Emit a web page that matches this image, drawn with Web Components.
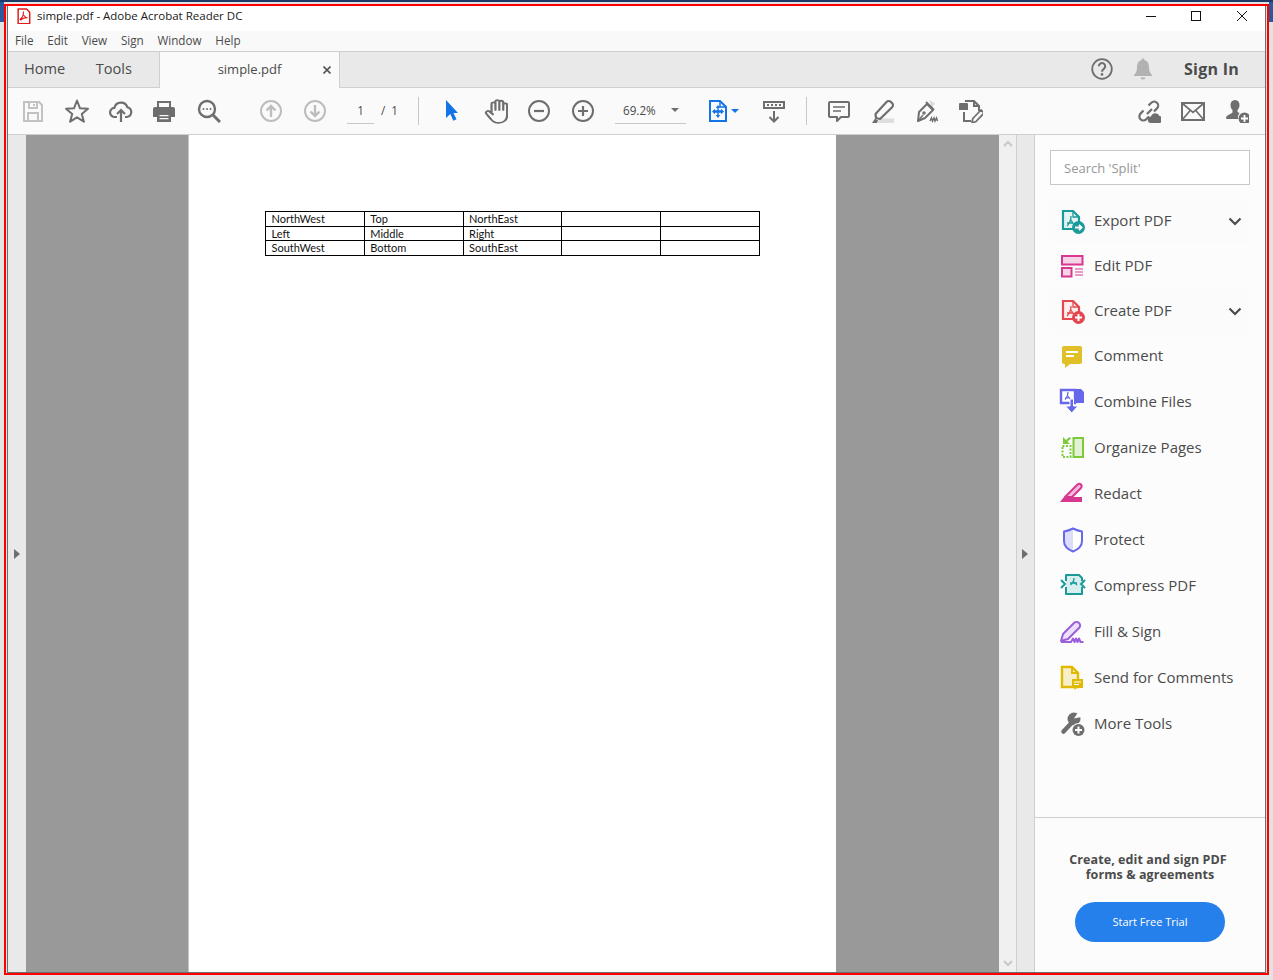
<!DOCTYPE html>
<html>
<head>
<meta charset="utf-8">
<title>simple.pdf - Adobe Acrobat Reader DC</title>
<style>
  html, body { margin: 0; height: 100%; overflow: hidden; }
  body { background-color: #e3e3e3; padding: 6px 7px 7px 7px; box-sizing: border-box; height: 980px; position: relative; font-family: "Open Sans", "Noto Sans", sans-serif;
    background-image: linear-gradient(#1f3a68, #1f3a68), linear-gradient(#2a5a9a, #2a5a9a), linear-gradient(#2a5a9a, #2a5a9a);
    background-size: 100% 2px, 4px 22px, 4px 22px; background-position: 0 0, 0 0, 100% 0; background-repeat: no-repeat; }
</style>
</head>
<body>
<reader-window>
  <reader-titlebar title-text="simple.pdf - Adobe Acrobat Reader DC"></reader-titlebar>
  <reader-menubar></reader-menubar>
  <reader-tabbar></reader-tabbar>
  <reader-toolbar></reader-toolbar>
  <reader-main></reader-main>
</reader-window>
<capture-frame></capture-frame>

<script>
const grey = '#6e6e6e';
const icons = {
  save: `<g fill="none" stroke="#c2c2c2" stroke-width="2"><path d="M3 3h15l3 3v16H3z"/><path d="M8 3v6h8V3M13 5v2M7 22v-8h10v8"/></g>`,
  star: `<path fill="none" stroke="${grey}" stroke-width="2" stroke-linejoin="round" d="M12 1.500l3 7.800 8 .5-6.200 5.100 2.100 7.800L12 18.300l-6.900 4.400 2.100-7.800L1 9.800l8-.5z"/>`,
  cloud: `<g fill="none" stroke="${grey}" stroke-width="2.200"><path d="M8 18H6a4.600 4.600 0 0 1-.6-9.200 6.800 6.800 0 0 1 13-.6A5 5 0 0 1 18 18h-2"/><path d="M12 23V11M8 15l4-4 4 4"/></g>`,
  print: `<g transform="translate(-1 0)"><path fill="${grey}" d="M5 2h14v6h-2V4H7v4H5zM3 8h18a2 2 0 0 1 2 2v8h-4v-4H5v4H1v-8a2 2 0 0 1 2-2z"/><path fill="${grey}" fill-rule="evenodd" d="M5 13h14v10H5zM7.500 16v1.300h9V16zm0 3v1.300h9V19z"/></g>`,
  search: `<g fill="none" stroke="${grey}"><circle cx="10" cy="10" r="8" stroke-width="2.400"/><path d="M16 16l7 7" stroke-width="3"/></g><g fill="${grey}"><circle cx="6.500" cy="10" r="1"/><circle cx="10" cy="10" r="1"/><circle cx="13.500" cy="10" r="1"/></g>`,
  up: `<g fill="none" stroke="#bdbdbd" stroke-width="2"><circle cx="12" cy="12" r="10"/><path stroke-width="2.400" d="M12 18V7M7.500 11.500L12 7l4.500 4.500"/></g>`,
  down: `<g fill="none" stroke="#bdbdbd" stroke-width="2"><circle cx="12" cy="12" r="10"/><path stroke-width="2.400" d="M12 6v11M7.500 12.500L12 17l4.500-4.500"/></g>`,
  cursor: `<path fill="#1473e6" transform="translate(1 0)" d="M6 1v18l4.300-4 3 6.800 3.200-1.500-3-6.300H18z"/>`,
  hand: `<path fill="none" stroke="${grey}" stroke-width="1.700" stroke-linejoin="round" stroke-linecap="round" transform="translate(1 0) scale(1.200 1)" d="M6.500 13V5.500a1.500 1.500 0 0 1 3 0V11M9.500 10V3.500a1.500 1.500 0 0 1 3 0V11M12.500 10V4a1.500 1.500 0 0 1 3 0v7M15.500 11V6.500a1.500 1.500 0 0 1 3 0V16c0 4-2.500 7-6.500 7-3 0-4.500-1-6-3.500l-3.500-5c-1-1.800 1-3.300 2.500-2l2.500 2.500"/>`,
  minus: `<g fill="none" stroke="${grey}" stroke-width="2"><circle cx="12" cy="12" r="10"/><path stroke-width="2.200" d="M7 12h10"/></g>`,
  plus: `<g fill="none" stroke="${grey}" stroke-width="2"><circle cx="12" cy="12" r="10"/><path stroke-width="2.200" d="M7 12h10M12 7v10"/></g>`,
  fit: `<path fill="none" stroke="#1473e6" stroke-width="2" d="M4 2h10l6 6v14H4z"/><path fill="none" stroke="#1473e6" stroke-width="1.500" d="M14 2v6h6"/><path fill="#1473e6" d="M12 6l2.300 3h-1.600v2.300H15V9.700l3 2.800-3 2.800v-1.600h-2.300V16h1.600L12 19l-2.300-3h1.600v-2.300H9v1.600l-3-2.800 3-2.800v1.600h2.300V9H9.700z"/>`,
  read: `<g fill="${grey}"><path d="M1 2h22v8H1zM3 4v4h18V4z" fill-rule="evenodd"/><path d="M5 5h2v2H5zM9 5h2v2H9zM13 5h2v2h-2zM17 5h2v2h-2z"/></g><path fill="none" stroke="${grey}" stroke-width="2" d="M12 12v10M7.500 18l4.500 4.500 4.500-4.500"/>`,
  comment: `<path fill="none" stroke="${grey}" stroke-width="2" stroke-linejoin="round" d="M3 3h18a1 1 0 0 1 1 1v13a1 1 0 0 1-1 1h-7l-4 4v-4H3a1 1 0 0 1-1-1V4a1 1 0 0 1 1-1z"/><path stroke="${grey}" stroke-width="1.600" d="M6 8h12M6 12h8"/>`,
  highlight: `<path fill="#dedede" d="M7 19.500h16V24H7z"/><path fill="${grey}" d="M1 24l3-4.500 3 2-1 2.500z"/><path fill="#fafafa" stroke="${grey}" stroke-width="2.200" stroke-linejoin="round" d="M5 19l-.5-4L15.500 3c1.200-1.300 3-1.300 4.300-.1l1.200 1.100c1.300 1.200 1.300 3 .1 4.200L9 20z"/>`,
  sign: `<path fill="#dcdcdc" d="M14 1l6 3-3 5z"/><path fill="none" stroke="${grey}" stroke-width="2" stroke-linejoin="round" d="M3 22l1-9 8-8 6 6-8 8zM11 3l8 8"/><circle cx="9" cy="14" r="1.700" fill="${grey}"/><path d="M3 22l5-6" stroke="${grey}" stroke-width="1.400"/><path fill="none" stroke="${grey}" stroke-width="1.500" d="M15 22l1.500-3 1 3 1.500-3 1 3 1.500-3 1 3"/>`,
  stamp: `<path fill="none" stroke="${grey}" stroke-width="2" d="M6 2h9l5 5v5M15 2v5h5M5 13v9h7"/><path fill="${grey}" d="M0 5a1 1 0 0 1 1-1h7a1 1 0 0 1 1 1v6H0z"/><path fill="#fafafa" stroke="${grey}" stroke-width="1.800" stroke-linejoin="round" d="M13 24l.8-4.500L22 11l3 3-8 8.500z"/>`,
  link: `<g fill="none" stroke="${grey}" stroke-width="2.200"><path d="M10 15l5-5M11.500 6.500l2.800-2.800a4 4 0 0 1 5.700 5.700L17 12.500M12 17.500l-2.800 2.800a4 4 0 0 1-5.700-5.700L6.500 11.500"/></g><path fill="${grey}" d="M14 24a3.200 3.200 0 0 1 0-6.400 4.500 4.500 0 0 1 8.500-.6 3.600 3.600 0 0 1 .5 7z"/>`,
  mail: `<g fill="none" stroke="${grey}" stroke-width="2"><rect x="1" y="4" width="22" height="17"/><path stroke-width="1.700" d="M1.500 4.500L12 13.500l10.500-9M1.500 20.500l7.700-9M22.500 20.500l-7.700-9"/></g>`,
  adduser: `<path fill="${grey}" d="M10 1c3 0 4.500 2.200 4.500 5 0 2-.8 4-2 5v2l2 1a7 7 0 0 0-1.500 6H2c-.8 0-1-.6-1-1.200 0-2.300 4.500-3.500 6.500-5.300v-2.500C6.300 10 5.500 8 5.500 6c0-2.800 1.500-5 4.500-5z"/><circle cx="19.500" cy="19.500" r="6" fill="${grey}"/><path stroke="#fff" stroke-width="1.800" d="M16 19.500h7M19.500 16v7"/>`,
  help: `<circle cx="12" cy="12" r="9.800" fill="none" stroke="${grey}" stroke-width="1.800"/><path fill="none" stroke="${grey}" stroke-width="2" d="M8.800 9.300a3.200 3.200 0 1 1 5 2.600c-1.100.8-1.800 1.400-1.800 2.800"/><circle cx="12" cy="17.400" r="1.300" fill="${grey}"/>`,
  bell: `<path fill="#b2b2b2" d="M12 1.500c1 0 1.500.7 1.500 1.500 3 .8 4.500 3.200 4.500 7 0 4 1 6 3 8v1H3v-1c2-2 3-4 3-8 0-3.800 1.500-6.200 4.500-7 0-.8.500-1.500 1.500-1.500zM9.500 20.500h5a2.500 2 0 0 1-5 0z"/>`,

  exportpdf: `<path fill="#e6f3f3" stroke="#1b9a9a" stroke-width="2.200" d="M4 3h10l6 6v12H4z"/><path fill="none" stroke="#1b9a9a" stroke-width="1.300" d="M14 3v6h6M12 8c0 4-2 8-4 10M12 12l2.500 4M8 15h6"/><circle cx="19.500" cy="19.500" r="6.500" fill="#1b9a9a"/><path stroke="#fff" stroke-width="1.800" fill="none" d="M16 19.500h6M20 16.800l2.600 2.700-2.600 2.700"/>`,
  editpdf: `<g fill="#f6d4e7" stroke="#d83790" stroke-width="2"><rect x="3" y="3" width="20.500" height="8.500"/><rect x="3" y="15" width="9.500" height="8.500"/></g><path stroke="#d83790" stroke-width="1.100" d="M16 16h8M16 19h8M16 22h8"/>`,
  createpdf: `<path fill="#fdeeee" stroke="#e34850" stroke-width="2.200" d="M4 3h10l6 6v12H4z"/><path fill="none" stroke="#e34850" stroke-width="1.300" d="M14 3v6h6M12 8c0 4-2 8-4 10M12 12l2.500 4M8 15h6"/><circle cx="19.500" cy="19.500" r="6.500" fill="#e34850"/><path stroke="#fff" stroke-width="2" d="M16 19.500h7M19.500 16v7"/>`,
  commenttool: `<path fill="#e0bf27" d="M5 3h16a2 2 0 0 1 2 2v14a2 2 0 0 1-2 2H11l-5 4v-4H5a2 2 0 0 1-2-2V5a2 2 0 0 1 2-2z"/><path stroke="#fff" stroke-width="2" d="M7 9h12M7 13h8"/>`,
  combine: `<path fill="#fff" stroke="#6767ec" stroke-width="2.400" d="M2 2h14v13H2z"/><path fill="#6767ec" d="M17 1h5l3 3v11h-8z"/><path fill="none" stroke="#6767ec" stroke-width="1.200" d="M9 4c0 3-1.500 6-3 7.500M9 8l2 3M6 10h5"/><path fill="#6767ec" stroke="#fff" stroke-width="1" d="M11 11h3.500v7H19l-6.300 7L6.500 18H11z"/>`,
  organize: `<rect x="14.500" y="4" width="9.500" height="19" fill="#e3f2d6" stroke="#7cca3c" stroke-width="2"/><rect x="3.500" y="12" width="8" height="11" fill="none" stroke="#7cca3c" stroke-width="2" stroke-dasharray="2 1.500"/><path fill="#7cca3c" d="M4 3v7h7l-2.500-2.500L12 4.500 10.300 3 7 6z"/>`,
  redact: `<path fill="#d83790" d="M1 22l4-5h18v5z"/><path fill="#f3bcdc" stroke="#d83790" stroke-width="2" stroke-linejoin="round" d="M6 17L18 5c1.500-1.500 3-1.500 4-.5s1 2.500-.5 4L13 17z"/>`,
  protect: `<path fill="#dcdcfb" d="M14 3v22c-5-2-8-5-8-10V6z"/><path fill="#fff" d="M14 3v22c5-2 8-5 8-10V6z"/><path fill="none" stroke="#6767ec" stroke-width="2" stroke-linejoin="round" d="M14 2.500C10 4.500 8 5 5 5.500V15c0 5 4 8.500 9 10.500 5-2 9-5.500 9-10.500V5.500c-3-.5-5-1-9-3z"/>`,
  compress: `<path fill="#d9eeee" d="M7 3h13l3 3v16H7z"/><path fill="none" stroke="#1b9a9a" stroke-width="2" stroke-linejoin="round" d="M7 9V3h13l3 3v3M23 15v7H7v-7"/><path fill="none" stroke="#1b9a9a" stroke-width="1.300" d="M15 6c0 3-1 5-3.500 7M15 10l3 3M11 11h7"/><path fill="none" stroke="#1b9a9a" stroke-width="2" d="M2 8l4 4-4 4M26 8l-4 4 4 4"/>`,
  fillsign: `<path fill="#ecdffa" stroke="#9a5ede" stroke-width="2" stroke-linejoin="round" d="M2 23l2-7L15 5c1.500-1.500 3.500-1.500 5 0s1.500 3.500 0 5L9 21z"/><path fill="none" stroke="#9a5ede" stroke-width="2" stroke-linejoin="round" d="M2 24h10l2-3.500 1.500 3.500 1.500-3.500 1.500 3.500 1.500-3.500 1.500 3.500h3"/>`,
  sendcomments: `<path fill="#f7efcc" stroke="#dfba00" stroke-width="2.400" d="M3 3h10l6 6v14H3z"/><path fill="none" stroke="#dfba00" stroke-width="2" d="M13 3v6h6"/><path fill="#dfba00" d="M13 15h11v9h-6l-2.500 2v-2H13z"/><path stroke="#fff" stroke-width="1.100" d="M15 18h7M15 20.500h5"/>`,
  moretools: `<path stroke="${grey}" stroke-width="4.500" stroke-linecap="round" d="M4.500 21.500L13 12.500"/><circle cx="15" cy="9" r="6.500" fill="${grey}"/><path fill="#fcfcfc" d="M15 8.500L20 1h5v5.500z"/><circle cx="19.500" cy="20" r="7" fill="#fcfcfc"/><circle cx="19.500" cy="20" r="6" fill="${grey}"/><path stroke="#fff" stroke-width="2" d="M16 20h7M19.500 16.500v7"/>`,
  pdfmark: `<path fill="#fff" stroke="#e01b1b" stroke-width="1.400" d="M3 1h8l3 3v11H3z" transform="scale(1.050)"/><path fill="none" stroke="#e01b1b" stroke-width="1.100" d="M8.500 3.500c0 3-1.200 6-3 7.500-.8.700 0 1.300 1 .5 1-1 3.500-2 6-1.800M8.500 7l2.800 3.200"/>`
};

// small helper, the markup of all shadow roots is set in the class
class ShadowEl extends HTMLElement {
  constructor() {
    super();
    this.attachShadow({ mode: 'open' });
  }
  connectedCallback() {
    this.shadowRoot.innerHTML = this.render();
  }
}

class ReaderIcon extends ShadowEl {
  render() {
    const size = this.getAttribute('size') || 24;
    const box = this.getAttribute('box') || 24;
    return `<style>:host{display:inline-flex;line-height:0}</style>
      <svg width="${size}" height="${size}" viewBox="0 0 ${box} ${box}">${icons[this.getAttribute('name')] || ''}</svg>`;
  }
}

class ReaderWindow extends ShadowEl {
  render() {
    return `<style>
      :host { display: flex; flex-direction: column; width: 1259px; height: 967px; box-sizing: border-box;
        border: 1px solid #6e6e6e; border-top: 0; background: #fff; color: #4b4b4b; }
    </style><slot></slot>`;
  }
}

class ReaderTitlebar extends ShadowEl {
  render() {
    return `<style>
      :host { display: flex; align-items: center; height: 25px; background: #fff; flex: none; padding: 0 0 6px 7px; box-sizing: border-box; }
      .t { margin-left: 6px; font: 11.500px/1 "Open Sans", sans-serif; color: #1a1a1a; white-space: nowrap; }
      .btns { margin-left: auto; display: flex; align-items: center; padding-right: 18px; }
      svg { display: block; }
      .min { margin-right: 35px; } .max { margin-right: 36px; }
    </style>
    <reader-icon name="pdfmark" size="16" box="16"></reader-icon>
    <span class="t">${this.getAttribute('title-text')}</span>
    <div class="btns">
      <svg class="min" width="10" height="10"><path d="M0 5.500h10" stroke="#111"/></svg>
      <svg class="max" width="10" height="10"><rect x=".5" y=".5" width="9" height="9" fill="none" stroke="#111"/></svg>
      <svg width="10" height="10"><path d="M0 0l10 10M10 0L0 10" stroke="#111"/></svg>
    </div>`;
  }
}

class ReaderMenubar extends ShadowEl {
  render() {
    const items = ['File', 'Edit', 'View', 'Sign', 'Window', 'Help'];
    return `<style>
      :host { display: flex; gap: 13.700px; height: 21px; background: #f9f9f9; flex: none; padding: 0 0 2px 7px;
        box-sizing: border-box; border-bottom: 1px solid #cfcfcf; align-items: center; font: 11.700px "Open Sans", sans-serif; color: #4b4b4b; }
    </style>${items.map(i => `<span>${i}</span>`).join('')}`;
  }
}

class ReaderTabbar extends ShadowEl {
  render() {
    return `<style>
      :host { display: flex; height: 36px; background: #e9e9e9; flex: none; box-sizing: border-box;
        border-bottom: 1px solid #cfcfcf; font: 14.600px "Open Sans", sans-serif; color: #4b4b4b; }
      .nav { width: 151px; flex: none; display: flex; align-items: center; padding: 0 0 3px 16px; gap: 30.500px; box-sizing: border-box; }
      .doc { position: relative; width: 181px; height: 36px; box-sizing: border-box; flex: none; background: #fafafa; padding-bottom: 2px;
        border: 1px solid #cfcfcf; border-width: 0 1px; display: flex; align-items: center; justify-content: center; font-size: 13px; }
      .x { position: absolute; right: 8px; top: 14px; }
      .right { margin-left: auto; display: flex; align-items: center; padding: 0 26px 1px 0; }
      .signin { font-weight: 700; font-size: 16px; letter-spacing: .25px; margin-left: 29px; color: #4b4b4b; }
      reader-icon + reader-icon { margin-left: 17px; }
    </style>
    <div class="nav"><span>Home</span><span>Tools</span></div>
    <div class="doc"><span>simple.pdf</span>
      <svg class="x" width="8" height="8"><path d="M.5.500l7 7M7.500.500l-7 7" stroke="#555" stroke-width="1.600"/></svg></div>
    <div class="right">
      <reader-icon name="help"></reader-icon><reader-icon name="bell"></reader-icon>
      <span class="signin">Sign In</span>
    </div>`;
  }
}

class ToolBtn extends ShadowEl {
  render() {
    const caret = this.hasAttribute('caret');
    return `<style>
      :host { display: flex; align-items: center; justify-content: center; width: 44px; height: 46px; flex: none; position: relative; }
      .c { position: absolute; left: 35px; top: 21px; width: 0; height: 0; border: 4px solid transparent; border-top: 4px solid #1473e6; border-bottom: 0; }
    </style><reader-icon name="${this.getAttribute('name')}" size="${this.getAttribute('size') || 24}" box="24"></reader-icon>${caret ? '<i class="c"></i>' : ''}`;
  }
}

class ReaderToolbar extends ShadowEl {
  render() {
    const btn = (n, extra = '') => `<tool-btn name="${n}" ${extra}></tool-btn>`;
    return `<style>
      :host { display: flex; align-items: center; height: 47px; background: #fafafa; flex: none; box-sizing: border-box;
        border-bottom: 1px solid #cfcfcf; padding: 0 6px 0 3px; font: 11.700px "Open Sans", sans-serif; color: #4b4b4b; }
      .gap18 { width: 18px; flex: none; }
      .page { display: flex; align-items: flex-start; margin-left: 10px; width: 51px; flex: none; height: 25px; }
      .num { width: 28px; height: 24px; line-height: 23px; text-align: center; border-bottom: 1px solid #c8c8c8; }
      .of { margin-left: 7px; line-height: 23px; white-space: nowrap; word-spacing: 3px; }
      .sep { width: 1px; height: 28px; background: #c8c8c8; flex: none; }
      .zoom { width: 71px; height: 25px; margin: 0 10px; flex: none; box-sizing: border-box; border-bottom: 1px solid #c8c8c8;
        display: flex; align-items: flex-start; padding: 2px 0 0 8px; position: relative; line-height: 18px; }
      .zoom i { position: absolute; left: 56px; top: 9px; border: 4px solid transparent; border-top: 4px solid #6e6e6e; border-bottom: 0; }
      .end { margin-left: auto; display: flex; }
    </style>
    ${btn('save')}${btn('star')}${btn('cloud')}${btn('print')}${btn('search')}
    <span class="gap18"></span>
    ${btn('up')}${btn('down')}
    <div class="page"><span class="num">1</span><span class="of">/ 1</span></div>
    <span class="sep" style="margin:0 10px 0 20px"></span>
    ${btn('cursor')}${btn('hand', 'size="26"')}${btn('minus')}${btn('plus')}
    <div class="zoom">69.2%<i></i></div>
    ${btn('fit', 'caret')}
    <span style="width:12px;flex:none"></span>
    ${btn('read')}
    <span class="sep" style="margin:0 10px"></span>
    ${btn('comment')}${btn('highlight')}${btn('sign')}${btn('stamp')}
    <div class="end">${btn('link')}${btn('mail')}${btn('adduser')}</div>`;
  }
}

class ReaderMain extends ShadowEl {
  render() {
    return `<style>
      :host { display: flex; flex: 1; min-height: 0; }
      .rail { background: #e9e9e9; flex: none; display: flex; align-items: center; justify-content: center; }
      .rail i { display: block; border: 5px solid transparent; border-left: 6px solid #6e6e6e; border-right: 0; }
      .left { width: 18px; }
      .right { width: 17px; border: 1px solid #cfcfcf; border-width: 0 1px; box-sizing: content-box; padding-right: 0; }
      .right i { margin-right: 2px; }
      .stage { flex: none; width: 973px; background: #999; display: flex; padding-left: 162px; box-sizing: border-box; }
      .bar { width: 17px; flex: none; background: #f0f0f0; display: flex; flex-direction: column; justify-content: space-between; align-items: center; padding: 5px 0; box-sizing: border-box; }
    </style>
    <div class="rail left"><i></i></div>
    <div class="stage"><pdf-page></pdf-page></div>
    <div class="bar">
      <svg width="10" height="7"><path d="M1 6l4-4 4 4" fill="none" stroke="#c8c8c8" stroke-width="2"/></svg>
      <svg width="10" height="7"><path d="M1 1l4 4 4-4" fill="none" stroke="#c8c8c8" stroke-width="2"/></svg>
    </div>
    <div class="rail right"><i></i></div>
    <tools-panel></tools-panel>`;
  }
}

class PdfPage extends ShadowEl {
  render() {
    const rows = [['NorthWest', 'Top', 'NorthEast', 15], ['Left', 'Middle', 'Right', 14], ['SouthWest', 'Bottom', 'SouthEast', 15]];
    return `<style>
      :host { display: block; width: 648px; height: 100%; background: #fff; border-left: 1px solid #c4c4c4; box-sizing: border-box; padding: 76px 0 0 76px; }
      table { border-collapse: collapse; table-layout: fixed; width: 495px; font: 11px/1 Lato, "Liberation Sans", sans-serif; color: #111; }
      td { border: 1px solid #000; padding: 0 0 1px 5.500px; box-sizing: border-box; white-space: nowrap; overflow: hidden; vertical-align: middle; }
    </style>
    <table>${rows.map(r => `<tr style="height:${r[3]}px">${r.slice(0, 3).map(c => `<td>${c}</td>`).join('')}<td></td><td></td></tr>`).join('')}</table>`;
  }
}

class ToolRow extends ShadowEl {
  render() {
    const more = this.hasAttribute('more');
    return `<style>
      :host { display: flex; align-items: center; flex: none; height: var(--h, 46px); box-sizing: border-box;
        margin: 0 15px; padding-left: 9px; border-radius: 4px; ${more ? 'background:#fbfbfb;' : ''} font: 15px "Open Sans", sans-serif; color: #4b4b4b; white-space: nowrap; }
      span { margin-left: 7px; padding-bottom: 3px; }
      svg { margin-left: auto; margin-right: 8px; }
    </style>
    <reader-icon name="${this.getAttribute('icon')}" size="28" box="28"></reader-icon>
    <span>${this.getAttribute('label')}</span>
    ${more ? '<svg width="14" height="9"><path d="M1.500 1.500L7 7l5.500-5.500" fill="none" stroke="#4b4b4b" stroke-width="2.200"/></svg>' : ''}`;
  }
}

class ToolsPanel extends ShadowEl {
  render() {
    const tools = [
      ['exportpdf', 'Export PDF', 1, 45], ['editpdf', 'Edit PDF', 0, 45], ['createpdf', 'Create PDF', 1, 45],
      ['commenttool', 'Comment', 0, 45], ['combine', 'Combine Files', 0, 46], ['organize', 'Organize Pages', 0, 46],
      ['redact', 'Redact', 0, 46], ['protect', 'Protect', 0, 46], ['compress', 'Compress PDF', 0, 46],
      ['fillsign', 'Fill &amp; Sign', 0, 46], ['sendcomments', 'Send for Comments', 0, 46], ['moretools', 'More Tools', 0, 46]
    ];
    return `<style>
      :host { display: flex; flex-direction: column; width: 230px; flex: none; background: #fcfcfc; }
      .search { margin: 15px 15px 0 15px; height: 35px; flex: none; box-sizing: border-box; background: #fff; border: 1px solid #c8c8c8;
        padding-left: 13px; display: flex; align-items: center; font: 13px "Open Sans", sans-serif; color: #979797; }
      .list { margin-top: 14px; display: flex; flex-direction: column; flex: 1; }
      .promo { height: 155px; flex: none; box-sizing: border-box; border-top: 1px solid #cfcfcf; display: flex; flex-direction: column; align-items: center; padding-top: 34px; }
      .promo p { margin: 0 4px 0 0; font: 700 12.500px/15px "Open Sans", sans-serif; letter-spacing: .08px; color: #4b4b4b; text-align: center; }
      .promo p span { padding-left: 4px; }
      .cta { margin-top: 20px; width: 150px; height: 40px; flex: none; border-radius: 20px; background: #2680eb; color: #fff; display: flex;
        align-items: center; justify-content: center; font: 11px "Open Sans", sans-serif; padding-bottom: 2px; box-sizing: border-box; }
    </style>
    <div class="search">Search 'Split'</div>
    <div class="list">
      ${tools.map(t => `<tool-row icon="${t[0]}" label="${t[1]}" ${t[2] ? 'more' : ''} style="--h:${t[3]}px"></tool-row>`).join('')}
    </div>
    <div class="promo"><p>Create, edit and sign PDF<br><span>forms &amp; agreements</span></p><div class="cta">Start Free Trial</div></div>`;
  }
}

class CaptureFrame extends ShadowEl {
  render() {
    return `<style>
      :host { position: absolute; left: 4px; top: 4px; width: 1265px; height: 971px; box-sizing: border-box; border: 2px solid #f00; pointer-events: none; }
    </style>`;
  }
}

customElements.define('reader-icon', ReaderIcon);
customElements.define('reader-window', ReaderWindow);
customElements.define('reader-titlebar', ReaderTitlebar);
customElements.define('reader-menubar', ReaderMenubar);
customElements.define('reader-tabbar', ReaderTabbar);
customElements.define('tool-btn', ToolBtn);
customElements.define('reader-toolbar', ReaderToolbar);
customElements.define('reader-main', ReaderMain);
customElements.define('pdf-page', PdfPage);
customElements.define('tool-row', ToolRow);
customElements.define('tools-panel', ToolsPanel);
customElements.define('capture-frame', CaptureFrame);
</script>
</body>
</html>
